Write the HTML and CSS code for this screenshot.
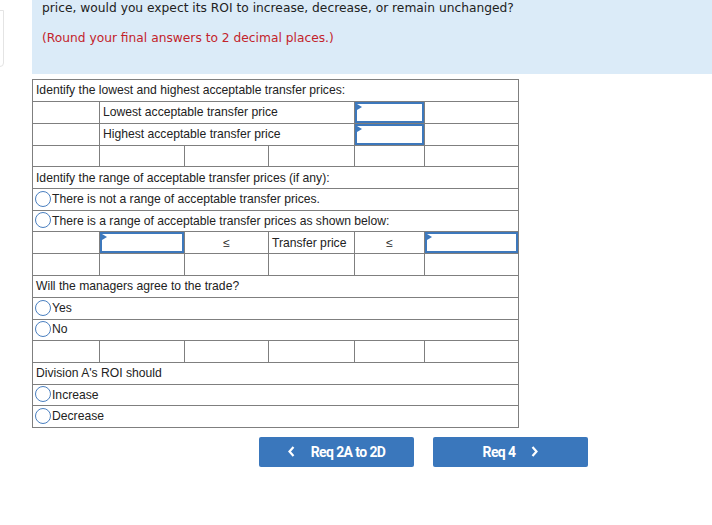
FILE: index.html
```html
<!DOCTYPE html>
<html>
  <head>
    <title>Req 3</title>
    <link rel="stylesheet" href="styles.css">
  </head>
  <body>
    <div class="page">
      <div class="side">
        <div class="side-card"></div>
      </div>
      <div class="main">
        <div class="prompt">
          <p class="question">price, would you expect its ROI to increase, decrease, or remain unchanged?</p>
          <p class="note">(Round your final answers to 2 decimal places.)</p>
        </div>

        <table class="answer-table">
          <colgroup>
            <col class="c1"><col class="c2"><col class="c3"><col class="c4"><col class="c5"><col class="c6">
          </colgroup>
          <tr><td colspan="6">Identify the lowest and highest acceptable transfer prices:</td></tr>
          <tr>
            <td></td>
            <td colspan="3">Lowest acceptable transfer price</td>
            <td class="input-cell"><div class="entry"></div></td>
            <td></td>
          </tr>
          <tr>
            <td></td>
            <td colspan="3">Highest acceptable transfer price</td>
            <td class="input-cell"><div class="entry"></div></td>
            <td></td>
          </tr>
          <tr><td></td><td></td><td></td><td></td><td></td><td></td></tr>

          <tr><td colspan="6">Identify the range of acceptable transfer prices (if any):</td></tr>
          <tr><td colspan="6" class="choice"><span class="radio"></span>There is not a range of acceptable transfer prices.</td></tr>
          <tr><td colspan="6" class="choice"><span class="radio"></span>There is a range of acceptable transfer prices as shown below:</td></tr>
          <tr>
            <td></td>
            <td class="input-cell"><div class="entry"></div></td>
            <td class="center">&le;</td>
            <td>Transfer price</td>
            <td class="center">&le;</td>
            <td class="input-cell"><div class="entry"></div></td>
          </tr>
          <tr><td></td><td></td><td></td><td></td><td></td><td></td></tr>

          <tr><td colspan="6">Will the managers agree to the trade?</td></tr>
          <tr><td colspan="6" class="choice"><span class="radio"></span>Yes</td></tr>
          <tr><td colspan="6" class="choice"><span class="radio"></span>No</td></tr>
          <tr><td></td><td></td><td></td><td></td><td></td><td></td></tr>

          <tr><td colspan="6">Division A's ROI should</td></tr>
          <tr><td colspan="6" class="choice"><span class="radio"></span>Increase</td></tr>
          <tr><td colspan="6" class="choice"><span class="radio"></span>Decrease</td></tr>
        </table>

        <div class="nav">
          <button class="nav-btn">
            <svg class="chev prev" width="7" height="11" viewBox="0 0 7 11"><path d="M5.5 1 L1.5 5.5 L5.5 10" fill="none" stroke="white" stroke-width="2.2"/></svg>
            Req 2A to 2D
          </button>
          <button class="nav-btn">
            Req 4
            <svg class="chev next" width="7" height="11" viewBox="0 0 7 11"><path d="M1.5 1 L5.5 5.5 L1.5 10" fill="none" stroke="white" stroke-width="2.2"/></svg>
          </button>
        </div>
      </div>
    </div>
  </body>
</html>
```

FILE: styles.css
```css
body {
  margin: 0;
  background-color: white;
  font-family: Arial, "Liberation Sans", sans-serif;
  color: #222;
  overflow: hidden;
}
.page {
  display: flex;
}
.side {
  width: 32px;
  flex: none;
}
.side-card {
  margin-top: 10px;
  margin-left: -20px;
  width: 22px;
  height: 55px;
  border: 1px solid #e4e4e4;
  border-radius: 0 0 4px 0;
}
.main {
  flex: 1;
}

/* Question text */
.prompt {
  background-color: #dbebf8;
  height: 75px;
  padding: 0 10px;
  box-sizing: border-box;
  font-family: "DejaVu Sans", Verdana, sans-serif;
  font-size: 12.25px;
}
.prompt p {
  margin: 0;
}
.question {
  margin-top: -1px !important;
  line-height: 18px;
  color: #222;
}
.note {
  margin-top: 12px !important;
  line-height: 18px;
  color: #c3232b;
}

/* Answer table */
.answer-table {
  margin-top: 5px;
  border-collapse: collapse;
  table-layout: fixed;
  width: 486px;
  font-size: 12.15px;
}
.c1 { width: 67px; }
.c2 { width: 85px; }
.c3 { width: 84px; }
.c4 { width: 86px; }
.c5 { width: 70px; }
.c6 { width: 94px; }
.answer-table td {
  border: 1px solid #7f7f7f;
  height: 20.7px;
  padding: 0 3px;
  white-space: nowrap;
}
.answer-table td.center {
  text-align: center;
}
.answer-table td.choice {
  padding: 0 1px 0 2px;
}
.answer-table td.input-cell {
  padding: 0;
}
.entry {
  position: relative;
  height: 100%;
  min-height: 21px;
  box-sizing: border-box;
  border: 2px solid #3d78bc;
}
.entry::before {
  content: "";
  position: absolute;
  left: 0;
  top: 0;
  border-top: 3px solid transparent;
  border-bottom: 3px solid transparent;
  border-left: 5px solid #3d78bc;
}
.radio {
  display: inline-block;
  vertical-align: middle;
  width: 16px;
  height: 16px;
  margin: -2px 1px 0 0;
  border: 1px solid #4a7fc0;
  border-radius: 50%;
  box-sizing: border-box;
}

/* Nav buttons */
.nav {
  display: flex;
  gap: 19px;
  margin: 9px 0 0 227px;
}
.nav-btn {
  display: flex;
  align-items: center;
  justify-content: center;
  width: 155px;
  height: 30px;
  padding: 0;
  background-color: #3a77bc;
  color: white;
  border: none;
  border-radius: 2px;
  font-family: Roboto, sans-serif;
  font-weight: bold;
  font-size: 14px;
  letter-spacing: -0.6px;
  cursor: pointer;
}
.chev.prev {
  margin-right: 16px;
}
.chev.next {
  margin-left: 16px;
}
```
